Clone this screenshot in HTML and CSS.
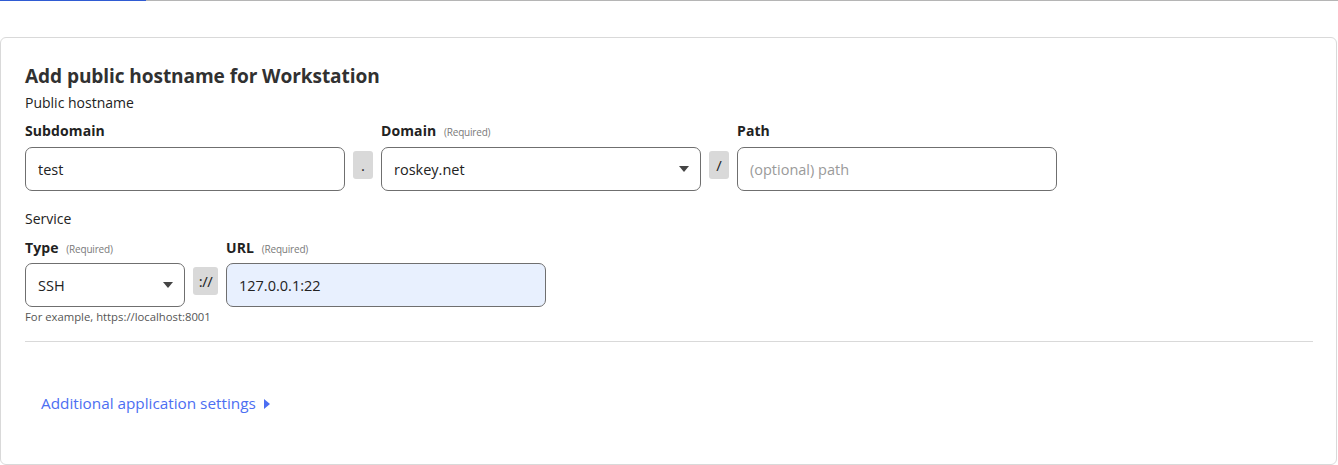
FILE: index.html
```html
<html>
<head>
    <title>Add public hostname</title>
    <link rel="stylesheet" href="styles.css">
</head>
<body>
    <div class="topBar"><div class="topBarActive"></div></div>
    <div class="card">
        <h2 class="cardTitle">Add public hostname for Workstation</h2>
        <div class="groupLabel">Public hostname</div>
        <div class="fieldRow">
            <div class="field wide">
                <label class="fieldLabel">Subdomain</label>
                <input class="textInput" type="text" value="test">
            </div>
            <span class="sep">.</span>
            <div class="field wide">
                <label class="fieldLabel">Domain <span class="req">(Required)</span></label>
                <div class="selectWrap">
                    <select class="textInput">
                        <option>roskey.net</option>
                    </select>
                    <span class="caret"></span>
                </div>
            </div>
            <span class="sep">/</span>
            <div class="field wide">
                <label class="fieldLabel">Path</label>
                <input class="textInput" type="text" placeholder="(optional) path">
            </div>
        </div>

        <div class="groupLabel service">Service</div>
        <div class="fieldRow">
            <div class="field narrow">
                <label class="fieldLabel">Type <span class="req">(Required)</span></label>
                <div class="selectWrap">
                    <select class="textInput">
                        <option>SSH</option>
                    </select>
                    <span class="caret"></span>
                </div>
                <div class="hint">For example, https://localhost:8001</div>
            </div>
            <span class="sep sepWide">://</span>
            <div class="field wide">
                <label class="fieldLabel">URL <span class="req">(Required)</span></label>
                <input class="textInput filled" type="text" value="127.0.0.1:22">
            </div>
        </div>

        <hr class="divider">

        <a class="moreLink" href="#">Additional application settings <span class="moreCaret"></span></a>
    </div>
</body>
</html>
```

FILE: styles.css
```css
body {
    margin: 0;
    background-color: white;
    font-family: "Open Sans", "Noto Sans", sans-serif;
    color: #313131;
}
.topBar {
    height: 1px;
    background-color: #b5b5b5;
}
.topBarActive {
    width: 146px;
    height: 1px;
    background-color: #2f5bd3;
}
.card {
    margin-top: 36px;
    margin-right: 1px;
    border: 1px solid #d9d9d9;
    border-radius: 6px;
    padding: 24px 23px 24px 24px;
    height: 378px;
}
.cardTitle {
    margin: 0;
    font-size: 19.1px;
    line-height: 28px;
    font-weight: 700;
    color: #313131;
    letter-spacing: -0.1px;
}
.groupLabel {
    margin-top: 3px;
    font-size: 14px;
    line-height: 20px;
    color: #222;
}
.groupLabel.service {
    margin-top: 18px;
}
.fieldRow {
    display: flex;
    align-items: flex-start;
    gap: 8px;
    margin-top: 8px;
}
.field {
    display: flex;
    flex-direction: column;
}
.field.wide {
    width: 320px;
}
.field.narrow {
    width: 160px;
}
.fieldLabel {
    height: 20px;
    font-size: 14px;
    line-height: 20px;
    font-weight: 700;
    color: #222;
    margin-bottom: 6px;
    letter-spacing: 0.1px;
    white-space: nowrap;
}
.req {
    font-size: 10px;
    line-height: 1;
    font-weight: 400;
    color: #7a7a7a;
    margin-left: 4px;
    letter-spacing: -0.2px;
}
.service + .fieldRow .fieldLabel {
    margin-bottom: 5px;
}
.service + .fieldRow {
    margin-top: 9px;
}
.textInput {
    box-sizing: border-box;
    width: 100%;
    height: 44px;
    border: 1px solid #6f6f6f;
    border-radius: 7px;
    padding: 0 12px;
    font-family: "Open Sans", "Noto Sans", sans-serif;
    font-size: 14.5px;
    color: #222;
    background-color: white;
    -webkit-appearance: none;
    appearance: none;
    outline: none;
}
.textInput::placeholder {
    color: #9a9a9a;
}
.textInput.filled {
    background-color: #e8f0fe;
}
.selectWrap {
    position: relative;
}
.caret {
    position: absolute;
    right: 12px;
    top: 19px;
    width: 0;
    height: 0;
    border-left: 5px solid transparent;
    border-right: 5px solid transparent;
    border-top: 6px solid #444;
}
.sep {
    box-sizing: border-box;
    width: 20px;
    height: 28px;
    margin-top: 30px;
    background-color: #d9d9d9;
    border-radius: 3px;
    font-size: 15px;
    line-height: 28px;
    text-align: center;
    color: #222;
}
.service + .fieldRow .sep {
    margin-top: 29px;
}
.sepWide {
    width: 25px;
    font-size: 15px;
    letter-spacing: -0.5px;
}
.hint {
    margin-top: 2px;
    white-space: nowrap;
    font-size: 11.3px;
    line-height: 16px;
    color: #555;
}
.divider {
    border: none;
    border-top: 1px solid #d9d9d9;
    margin: 16px 0 0 0;
}
.moreLink {
    display: inline-block;
    margin-top: 50px;
    margin-left: 16px;
    font-size: 15.3px;
    line-height: 22px;
    color: #4c6ef2;
    text-decoration: none;
}
.moreCaret {
    display: inline-block;
    width: 0;
    height: 0;
    margin-left: 4px;
    border-top: 5.5px solid transparent;
    border-bottom: 5.5px solid transparent;
    border-left: 6px solid #4c6ef2;
}
```
